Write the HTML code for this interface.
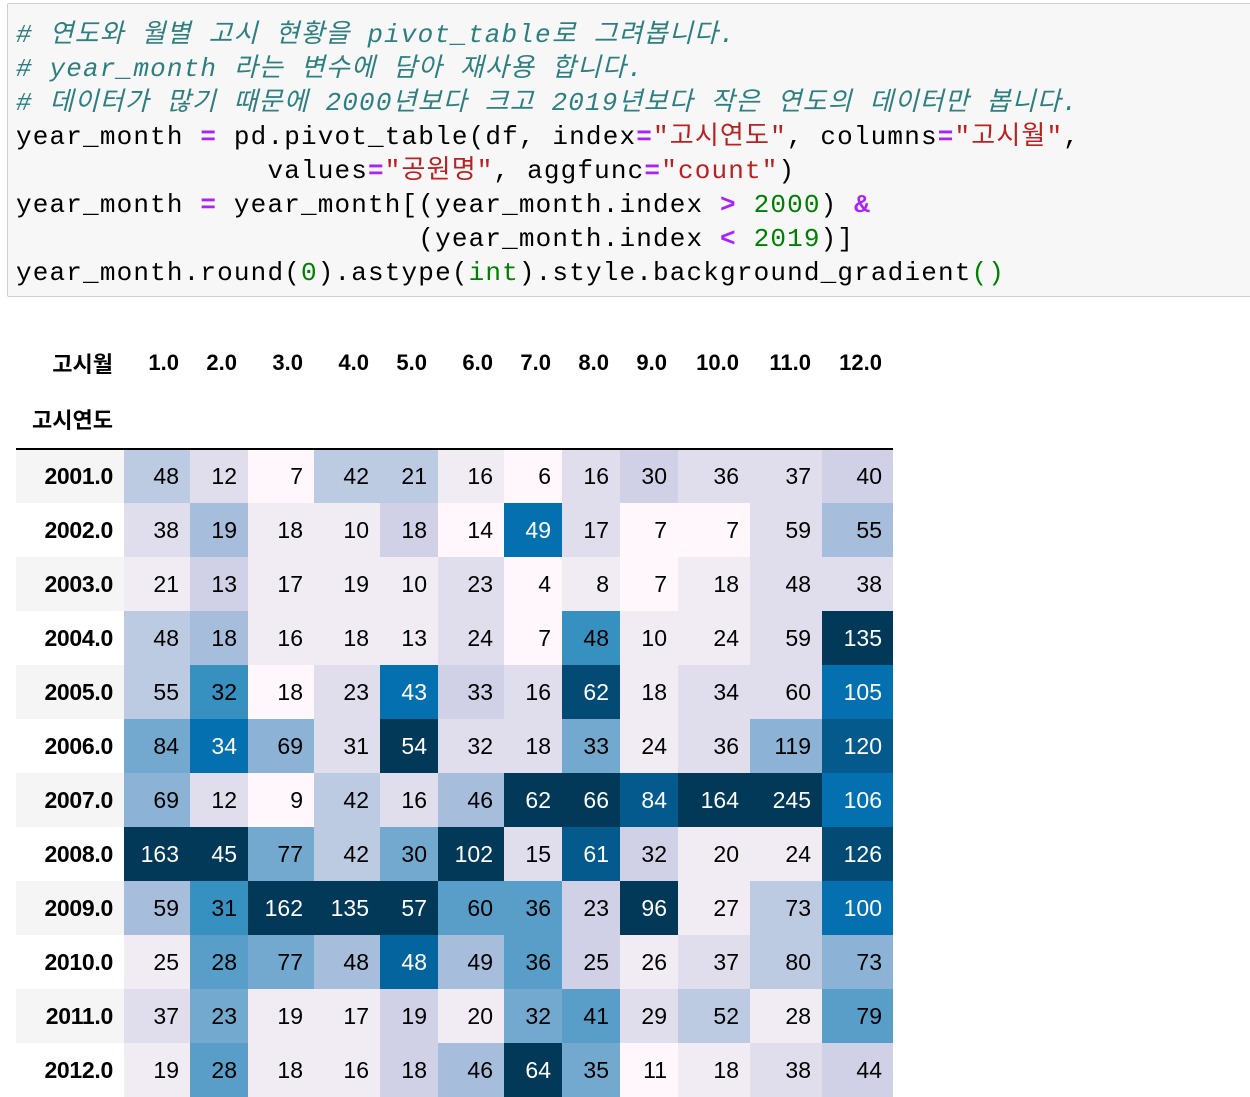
<!DOCTYPE html>
<html><head><meta charset="utf-8">
<style>
html,body{margin:0;padding:0;background:#fff;width:1250px;height:1092px;overflow:hidden;}
.code{position:absolute;left:7px;top:3px;width:1250px;height:294px;background:#f7f7f7;border:1px solid #cfcfcf;border-radius:2px;box-sizing:border-box;}
.code pre{margin:0;position:absolute;left:8px;top:14px;font-family:"Liberation Mono","Noto Sans CJK KR",monospace;font-size:26px;letter-spacing:1.16px;line-height:34px;color:#000;}
.c{color:#2f7f80;font-style:italic;}
.o{color:#aa22ff;font-weight:bold;}
.s{color:#ba2121;}
.n{color:#008000;}
table{position:absolute;left:16px;top:336px;border-collapse:collapse;font-family:"Liberation Sans","Noto Sans CJK KR",sans-serif;font-size:23px;table-layout:fixed;}
th,td{padding:0 11px 0 0;text-align:right;height:54px;box-sizing:border-box;}
thead th{font-weight:bold;font-size:22px;}
thead tr.hl th{height:59px;}
tbody th{font-weight:bold;font-size:23px;letter-spacing:-0.3px;}
tr.hl{border-bottom:2px solid #000;}
tbody tr:nth-child(odd) th{background:#f5f5f5;}
.w{color:#fff;}
.L0{background:#fff7fb}.L1{background:#f1ebf4}.L2{background:#e0deed}.L3{background:#d0d1e6}.L4{background:#bccbe2}.L5{background:#a6bddb}.L6{background:#8cb3d5}.L7{background:#74a9cf}.L8{background:#589ec8}.L9{background:#3690c0}.L11{background:#0570b0}.L12{background:#04649e}.L13{background:#045a8d}.L14{background:#034a74}.L15{background:#023858}
</style></head><body>
<div class="code"><pre><span class="c"># 연도와 월별 고시 현황을 pivot_table로 그려봅니다.</span>
<span class="c"># year_month 라는 변수에 담아 재사용 합니다.</span>
<span class="c"># 데이터가 많기 때문에 2000년보다 크고 2019년보다 작은 연도의 데이터만 봅니다.</span>
year_month <span class="o">=</span> pd.pivot_table(df, index<span class="o">=</span><span class="s">"고시연도"</span>, columns<span class="o">=</span><span class="s">"고시월"</span>,
               values<span class="o">=</span><span class="s">"공원명"</span>, aggfunc<span class="o">=</span><span class="s">"count"</span>)
year_month <span class="o">=</span> year_month[(year_month.index <span class="o">&gt;</span> <span class="n">2000</span>) <span class="o">&amp;</span>
                        (year_month.index <span class="o">&lt;</span> <span class="n">2019</span>)]
year_month.round(<span class="n">0</span>).astype(<span class="n">int</span>).style.background_gradient<span class="n">()</span></pre></div>

<table>
<colgroup><col style="width:108px"><col style="width:66px"><col style="width:58px"><col style="width:66px"><col style="width:66px"><col style="width:58px"><col style="width:66px"><col style="width:58px"><col style="width:58px"><col style="width:58px"><col style="width:72px"><col style="width:72px"><col style="width:71px"></colgroup>
<thead>
<tr><th>고시월</th><th>1.0</th><th>2.0</th><th>3.0</th><th>4.0</th><th>5.0</th><th>6.0</th><th>7.0</th><th>8.0</th><th>9.0</th><th>10.0</th><th>11.0</th><th>12.0</th></tr>
<tr class="hl"><th>고시연도</th><th></th><th></th><th></th><th></th><th></th><th></th><th></th><th></th><th></th><th></th><th></th><th></th></tr>
</thead>
<tbody>
<tr><th>2001.0</th><td class="L4">48</td><td class="L2">12</td><td class="L0">7</td><td class="L4">42</td><td class="L4">21</td><td class="L1">16</td><td class="L0">6</td><td class="L2">16</td><td class="L3">30</td><td class="L2">36</td><td class="L2">37</td><td class="L3">40</td></tr>
<tr><th>2002.0</th><td class="L2">38</td><td class="L5">19</td><td class="L1">18</td><td class="L1">10</td><td class="L3">18</td><td class="L0">14</td><td class="L11 w">49</td><td class="L2">17</td><td class="L0">7</td><td class="L0">7</td><td class="L2">59</td><td class="L5">55</td></tr>
<tr><th>2003.0</th><td class="L1">21</td><td class="L3">13</td><td class="L1">17</td><td class="L1">19</td><td class="L1">10</td><td class="L2">23</td><td class="L0">4</td><td class="L1">8</td><td class="L0">7</td><td class="L1">18</td><td class="L2">48</td><td class="L2">38</td></tr>
<tr><th>2004.0</th><td class="L4">48</td><td class="L5">18</td><td class="L1">16</td><td class="L1">18</td><td class="L1">13</td><td class="L2">24</td><td class="L0">7</td><td class="L9">48</td><td class="L1">10</td><td class="L1">24</td><td class="L2">59</td><td class="L15 w">135</td></tr>
<tr><th>2005.0</th><td class="L4">55</td><td class="L9">32</td><td class="L0">18</td><td class="L2">23</td><td class="L11 w">43</td><td class="L3">33</td><td class="L2">16</td><td class="L14 w">62</td><td class="L1">18</td><td class="L2">34</td><td class="L2">60</td><td class="L11 w">105</td></tr>
<tr><th>2006.0</th><td class="L7">84</td><td class="L11 w">34</td><td class="L6">69</td><td class="L2">31</td><td class="L15 w">54</td><td class="L2">32</td><td class="L2">18</td><td class="L7">33</td><td class="L1">24</td><td class="L2">36</td><td class="L6">119</td><td class="L13 w">120</td></tr>
<tr><th>2007.0</th><td class="L6">69</td><td class="L2">12</td><td class="L0">9</td><td class="L4">42</td><td class="L2">16</td><td class="L5">46</td><td class="L15 w">62</td><td class="L15 w">66</td><td class="L13 w">84</td><td class="L15 w">164</td><td class="L15 w">245</td><td class="L11 w">106</td></tr>
<tr><th>2008.0</th><td class="L15 w">163</td><td class="L15 w">45</td><td class="L7">77</td><td class="L4">42</td><td class="L7">30</td><td class="L15 w">102</td><td class="L2">15</td><td class="L13 w">61</td><td class="L3">32</td><td class="L1">20</td><td class="L1">24</td><td class="L14 w">126</td></tr>
<tr><th>2009.0</th><td class="L5">59</td><td class="L9">31</td><td class="L15 w">162</td><td class="L15 w">135</td><td class="L15 w">57</td><td class="L8">60</td><td class="L8">36</td><td class="L3">23</td><td class="L15 w">96</td><td class="L1">27</td><td class="L4">73</td><td class="L11 w">100</td></tr>
<tr><th>2010.0</th><td class="L1">25</td><td class="L8">28</td><td class="L7">77</td><td class="L5">48</td><td class="L12 w">48</td><td class="L5">49</td><td class="L8">36</td><td class="L3">25</td><td class="L1">26</td><td class="L2">37</td><td class="L4">80</td><td class="L6">73</td></tr>
<tr><th>2011.0</th><td class="L2">37</td><td class="L7">23</td><td class="L1">19</td><td class="L1">17</td><td class="L3">19</td><td class="L1">20</td><td class="L7">32</td><td class="L8">41</td><td class="L2">29</td><td class="L4">52</td><td class="L1">28</td><td class="L8">79</td></tr>
<tr><th>2012.0</th><td class="L1">19</td><td class="L8">28</td><td class="L1">18</td><td class="L1">16</td><td class="L3">18</td><td class="L5">46</td><td class="L15 w">64</td><td class="L7">35</td><td class="L0">11</td><td class="L1">18</td><td class="L2">38</td><td class="L3">44</td></tr>
</tbody>
</table>
</body></html>
